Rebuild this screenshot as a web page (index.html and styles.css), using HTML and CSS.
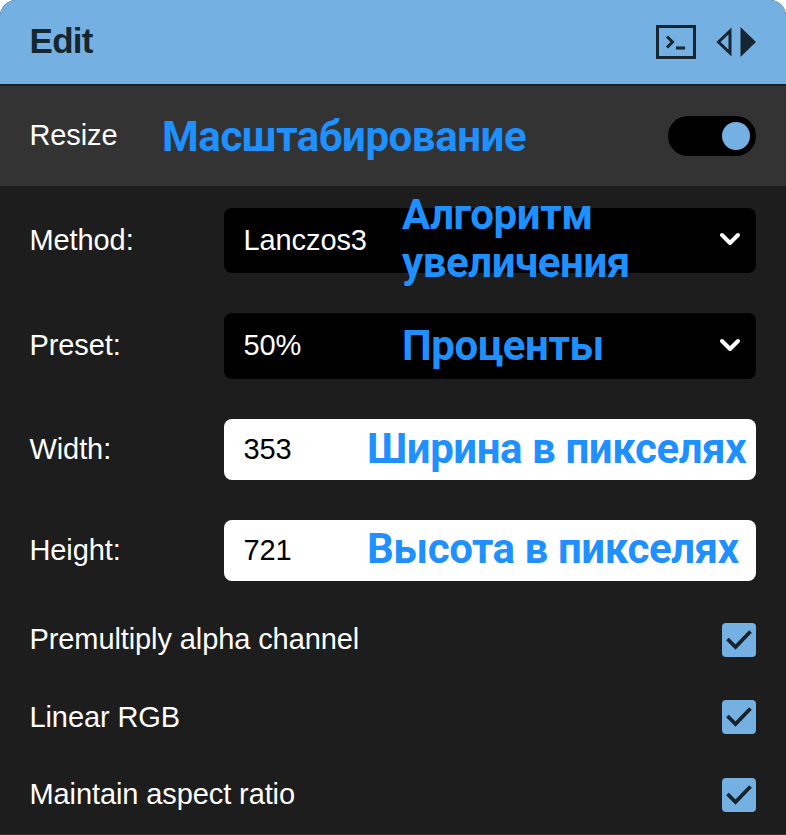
FILE: index.html
```html
<!DOCTYPE html>
<html lang="ru">
<head>
<meta charset="utf-8">
<title>Edit</title>
<link rel="stylesheet" href="styles.css">
</head>
<body>
<main class="panel">
  <header class="header">
    <h1 class="title">Edit</h1>
    <div class="actions">
      <svg class="cli" width="40" height="34" viewBox="0 0 40 34" fill="none" stroke="currentColor" stroke-width="3"><path d="M1.500 1.500h37v31h-37z"/><path d="M11 11.500l5.500 5.500-5.500 5.500M20 23h9"/></svg>
      <svg class="swap" width="40" height="32" viewBox="0 0 40 32"><path d="M14 5v22L2.500 16z" fill="none" stroke="currentColor" stroke-width="3"/><path d="M24.500 1v30L40 16z" fill="currentColor"/></svg>
    </div>
  </header>
  <section class="section-head">
    <span class="label">Resize</span>
    <span class="note note-resize">Масштабирование</span>
    <span class="toggle"><span class="knob"></span></span>
  </section>
  <div class="row row-method">
    <span class="label">Method:</span>
    <div class="field select"><span class="value">Lanczos3</span>
      <svg class="chevron" width="22" height="14" viewBox="0 0 22 14"><path d="M3 3l8 8 8-8"/></svg>
      <span class="note note-method">Алгоритм<br>увеличения</span></div>
  </div>
  <div class="row row-preset">
    <span class="label">Preset:</span>
    <div class="field select"><span class="value">50%</span>
      <svg class="chevron" width="22" height="14" viewBox="0 0 22 14"><path d="M3 3l8 8 8-8"/></svg>
      <span class="note note-preset">Проценты</span></div>
  </div>
  <div class="row row-width">
    <span class="label">Width:</span>
    <div class="field input"><span class="value">353</span><span class="note note-size">Ширина в пикселях</span></div>
  </div>
  <div class="row row-height">
    <span class="label">Height:</span>
    <div class="field input"><span class="value">721</span><span class="note note-size">Высота в пикселях</span></div>
  </div>
  <div class="checks">
    <div class="check"><span class="label">Premultiply alpha channel</span><svg class="box" width="34" height="34" viewBox="0 0 34 34"><path d="M5.500 16l8 8L28.500 8.500"/></svg></div>
    <div class="check"><span class="label label-low">Linear RGB</span><svg class="box" width="34" height="34" viewBox="0 0 34 34"><path d="M5.500 16l8 8L28.500 8.500"/></svg></div>
    <div class="check"><span class="label">Maintain aspect ratio</span><svg class="box" width="34" height="34" viewBox="0 0 34 34"><path d="M5.500 16l8 8L28.500 8.500"/></svg></div>
  </div>
</main>
</body>
</html>
```
FILE: styles.css
```css
* { box-sizing: border-box; }
body { margin: 0; background: #fff; }
.panel { width: 786px; height: 835px; overflow: hidden; background: #1d1d1d; border-bottom: 1px solid #353333; border-radius: 16px 16px 0 0; color: #fff; font: 29px/34px "Liberation Sans", Arial, sans-serif; letter-spacing: -0.1px; }
.header { height: 86px; padding: 0 30px; display: flex; align-items: center; justify-content: space-between; background: #74b1e2; border-bottom: 2px solid #17222b; color: #152631; }
.title { margin: 0 0 0 -0.5px; padding-bottom: 2px; font: 700 35px/42px "Liberation Sans", Arial, sans-serif; letter-spacing: -0.7px; }
.actions { display: flex; align-items: center; gap: 20px; }
.actions svg { display: block; }
.section-head { height: 100px; padding: 0 30px; display: flex; align-items: center; background: #333; position: relative; }
.label, .value { margin-left: -0.5px; padding-bottom: 2px; }
.label-low { padding-bottom: 0; }
.toggle { margin-left: auto; width: 88px; height: 40px; padding: 6px; border-radius: 20px; background: #000; display: flex; justify-content: flex-end; }
.knob { width: 28px; height: 28px; border-radius: 50%; background: #74b1e2; }
.row { display: grid; grid-template-columns: 194px 532px; align-items: center; margin: 0 30px; }
.field { position: relative; display: flex; align-items: center; justify-content: space-between; padding: 0 15px 0 20px; border-radius: 8px; }
.select { height: 65px; background: #000; }
.row-preset .select { height: 66px; }
.input { height: 61px; background: #fff; color: #000; }
.row-method { margin-top: 22px; }
.row-preset { margin-top: 40px; }
.row-width { margin-top: 40px; }
.row-height { margin-top: 40px; }
.chevron { fill: none; stroke: #fff; stroke-width: 4; stroke-linecap: round; stroke-linejoin: round; margin-bottom: 3px; }
.row-preset .chevron { margin-bottom: 2px; }
.note { position: absolute; color: #1e90ff; font: 700 42px/48px Roboto, sans-serif; letter-spacing: -0.43px; white-space: nowrap; }
.note-resize { left: 162px; top: 27px; }
.note-method { left: 178px; top: -17px; }
.note-preset { left: 178px; top: 9px; }
.note-size { left: 143px; top: 6px; }
.row-height .note-size { top: 5px; }
.checks { margin: 42px 30px 0; display: flex; flex-direction: column; gap: 43px; }
.check { display: flex; align-items: center; justify-content: space-between; height: 34px; }
.check:last-child { margin-top: 1px; }
.box { display: block; background: #74b1e2; border-radius: 4px; fill: none; stroke: #17222b; stroke-width: 3.800; }
```
